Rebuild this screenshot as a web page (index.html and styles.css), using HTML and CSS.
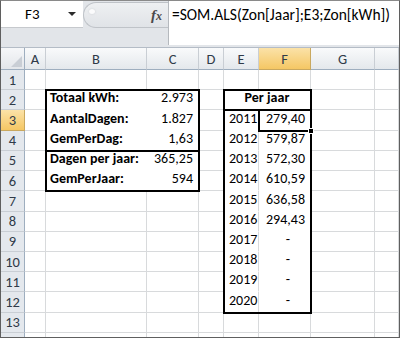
FILE: index.html
```html
<!DOCTYPE html>
<html>
<head>
<meta charset="utf-8">
<link rel="stylesheet" href="styles.css">
</head>
<body>
<div class="app">
  <div class="fbar">
    <div class="namecol">
      <div class="namebox"><span class="nb-text">F3</span><span class="nb-arrow"></span></div>
    </div>
    <div class="fxzone">
      <div class="fxbtn"><span class="grip"></span><span class="fx">f<span class="fx-x">x</span></span></div>
    </div>
    <div class="formula">=SOM.ALS(Zon[Jaar];E3;Zon[kWh])</div>
  </div>
  <div class="sheet">
    <div class="cells">
      <!-- header row -->
      <div class="corner"><span class="tri"></span></div>
      <div class="ch">A</div><div class="ch">B</div><div class="ch">C</div><div class="ch">D</div>
      <div class="ch">E</div><div class="ch sel">F</div><div class="ch">G</div><div class="ch"></div>

      <!-- row 1 -->
      <div class="rh">1</div>
      <div class="c"></div><div class="c"></div><div class="c"></div><div class="c"></div>
      <div class="c"></div><div class="c"></div><div class="c"></div><div class="c"></div>

      <!-- row 2 -->
      <div class="rh">2</div>
      <div class="c"></div>
      <div class="c fill b">Totaal kWh:</div>
      <div class="c fill num">2.973</div>
      <div class="c"></div>
      <div class="c fill b ctr span2">Per jaar</div>
      <div class="c"></div><div class="c"></div>

      <!-- row 3 -->
      <div class="rh sel">3</div>
      <div class="c"></div>
      <div class="c fill b">AantalDagen:</div>
      <div class="c fill num">1.827</div>
      <div class="c"></div>
      <div class="c fill yr">2011</div>
      <div class="c fill num">279,40</div>
      <div class="c"></div><div class="c"></div>

      <!-- row 4 -->
      <div class="rh">4</div>
      <div class="c"></div>
      <div class="c fill b">GemPerDag:</div>
      <div class="c fill num">1,63</div>
      <div class="c"></div>
      <div class="c fill yr">2012</div>
      <div class="c fill num">579,87</div>
      <div class="c"></div><div class="c"></div>

      <!-- row 5 -->
      <div class="rh">5</div>
      <div class="c"></div>
      <div class="c fill b">Dagen per jaar:</div>
      <div class="c fill num">365,25</div>
      <div class="c"></div>
      <div class="c fill yr">2013</div>
      <div class="c fill num">572,30</div>
      <div class="c"></div><div class="c"></div>

      <!-- row 6 -->
      <div class="rh">6</div>
      <div class="c"></div>
      <div class="c fill b">GemPerJaar:</div>
      <div class="c fill num">594</div>
      <div class="c"></div>
      <div class="c fill yr">2014</div>
      <div class="c fill num">610,59</div>
      <div class="c"></div><div class="c"></div>

      <!-- row 7 -->
      <div class="rh">7</div>
      <div class="c"></div><div class="c"></div><div class="c"></div><div class="c"></div>
      <div class="c fill yr">2015</div>
      <div class="c fill num">636,58</div>
      <div class="c"></div><div class="c"></div>

      <!-- row 8 -->
      <div class="rh">8</div>
      <div class="c"></div><div class="c"></div><div class="c"></div><div class="c"></div>
      <div class="c fill yr">2016</div>
      <div class="c fill num">294,43</div>
      <div class="c"></div><div class="c"></div>

      <!-- row 9 -->
      <div class="rh">9</div>
      <div class="c"></div><div class="c"></div><div class="c"></div><div class="c"></div>
      <div class="c fill yr">2017</div>
      <div class="c fill num dash">-</div>
      <div class="c"></div><div class="c"></div>

      <!-- row 10 -->
      <div class="rh">10</div>
      <div class="c"></div><div class="c"></div><div class="c"></div><div class="c"></div>
      <div class="c fill yr">2018</div>
      <div class="c fill num dash">-</div>
      <div class="c"></div><div class="c"></div>

      <!-- row 11 -->
      <div class="rh">11</div>
      <div class="c"></div><div class="c"></div><div class="c"></div><div class="c"></div>
      <div class="c fill yr">2019</div>
      <div class="c fill num dash">-</div>
      <div class="c"></div><div class="c"></div>

      <!-- row 12 -->
      <div class="rh">12</div>
      <div class="c"></div><div class="c"></div><div class="c"></div><div class="c"></div>
      <div class="c fill yr">2020</div>
      <div class="c fill num dash">-</div>
      <div class="c"></div><div class="c"></div>

      <!-- row 13 -->
      <div class="rh">13</div>
      <div class="c"></div><div class="c"></div><div class="c"></div><div class="c"></div>
      <div class="c"></div><div class="c"></div><div class="c"></div><div class="c"></div>

      <!-- row 14 (partial) -->
      <div class="rh"></div>
      <div class="c"></div><div class="c"></div><div class="c"></div><div class="c"></div>
      <div class="c"></div><div class="c"></div><div class="c"></div><div class="c"></div>
    </div>

    <!-- borders drawn over the cells, on a second grid with the same tracks -->
    <div class="marks">
      <div class="box box-summary"></div>
      <div class="box-split"></div>
      <div class="box box-years"></div>
      <div class="box-head"></div>
      <div class="cursor"><span class="handle"></span></div>
    </div>
  </div>
</div>
</body>
</html>
```
FILE: styles.css
```css
* {
  box-sizing: border-box;
  margin: 0;
  padding: 0;
}

html, body {
  width: 400px;
  height: 338px;
  overflow: hidden;
}

body {
  font-family: Carlito, Calibri, Lato, "Open Sans", sans-serif;
  color: #000;
}

.app {
  width: 400px;
  height: 338px;
  border: 1px solid #5f5f5f;
  border-top-color: #8a8a8a;
  display: flex;
  flex-direction: column;
  background: #e2e5e9;
}

/* ---------- formula bar ---------- */
.fbar {
  height: 44px;
  flex: none;
  display: flex;
}

.namecol {
  width: 82px;
}

.namebox {
  height: 27px;
  background: #fff;
  display: flex;
  align-items: center;
  border-bottom: 1px solid #c6c9cd;
}

.nb-text {
  margin-left: 24px;
  font-size: 15px;
}

.nb-arrow {
  margin-left: auto;
  margin-right: 7px;
  width: 0;
  height: 0;
  border-left: 4px solid transparent;
  border-right: 4px solid transparent;
  border-top: 4px solid #2b2b2b;
}

.fxzone {
  width: 85px;
  padding-top: 1px;
}

.fxbtn {
  height: 26px;
  border-radius: 13px 0 0 13px;
  background: linear-gradient(#eef0f2, #e0e3e7);
  border: 1px solid #bfc3c8;
  border-right: none;
  display: flex;
  align-items: center;
}

.grip {
  width: 6px;
  height: 5px;
  border-radius: 50%;
  margin-left: 5px;
  margin-top: -8px;
  background: #fbfbfc;
  box-shadow: 0 0 2px #c9ccd0;
}

.fx {
  margin-left: auto;
  margin-right: 6px;
  font-family: "Liberation Serif", serif;
  font-style: italic;
  font-weight: bold;
  font-size: 15px;
  color: #4a4a4a;
}

.fx-x {
  font-size: 12px;
}

.formula {
  flex: 1;
  background: #fff;
  border-left: 1px solid #b5b9be;
  padding: 6px 0 0 3px;
  font-size: 15.5px;
  line-height: 1;
}

/* ---------- sheet ---------- */
.sheet {
  flex: 1;
  margin-top: 2px;
  border-top: 1px solid #b4bcc6;
  background: #fff;
  display: grid;
  overflow: hidden;
}

.cells,
.marks {
  grid-area: 1 / 1;
  display: grid;
  grid-template-columns: 24px 21px 101px 52px 25px 35px 52px 64px 24px;
  grid-template-rows: 22px repeat(13, 20.23px) 1fr;
}

.marks {
  z-index: 2;
  pointer-events: none;
}

.corner {
  background: linear-gradient(#f6f7f9, #e3e6ea);
  border-right: 1px solid #9eaebf;
  border-bottom: 1px solid #9eaebf;
  display: flex;
  align-items: flex-end;
  justify-content: flex-end;
  padding: 0 2px 2px 0;
}

.tri {
  width: 0;
  height: 0;
  border-left: 11px solid transparent;
  border-bottom: 11px solid #c9ced5;
}

.ch {
  background: linear-gradient(#f9fafb, #e4e8ec);
  border-right: 1px solid #c9ced4;
  border-bottom: 1px solid #9eaebf;
  display: flex;
  align-items: center;
  justify-content: center;
  font-size: 14.5px;
  color: #2f3a48;
}

.rh {
  background: #e4e8ed;
  border-right: 1px solid #9eaebf;
  border-bottom: 1px solid #c9ced4;
  display: flex;
  align-items: center;
  justify-content: center;
  font-size: 14.5px;
  color: #2f3a48;
}

.ch.sel,
.rh.sel {
  background: linear-gradient(#fbe2a8, #f5c764);
  border-right-color: #c9a85f;
  border-bottom-color: #c9a85f;
}

.c {
  border-right: 1px solid #d8dadc;
  border-bottom: 1px solid #d8dadc;
  font-size: 14px;
  line-height: 1;
  display: flex;
  align-items: flex-end;
  padding: 0 4px 4px 4px;
  white-space: nowrap;
}

.fill {
  border-color: #fff;
}

.b {
  font-weight: bold;
}

.num {
  justify-content: flex-end;
  padding-right: 5px;
}

.num.dash {
  padding-right: 20px;
}

.ctr {
  justify-content: center;
}

.span2 {
  grid-column: span 2;
}

.yr {
  padding-left: 5px;
  border-right-color: #d8dadc;
}

/* ---------- overlay borders ---------- */
.box {
  border: 2px solid #000;
  margin: -1px;
}

.box-summary {
  grid-row: 3 / 8;
  grid-column: 3 / 5;
}

.box-split {
  grid-row: 6;
  grid-column: 3 / 5;
  border-top: 2px solid #000;
  margin-top: -1px;
}

.box-years {
  grid-row: 3 / 14;
  grid-column: 6 / 8;
}

.box-head {
  grid-row: 3;
  grid-column: 6 / 8;
  border-bottom: 2px solid #000;
  margin-bottom: -1px;
}

.cursor {
  grid-row: 4;
  grid-column: 7;
  border: 2px solid #000;
  margin: -1px;
  position: relative;
}

.handle {
  position: absolute;
  right: -4px;
  bottom: -4px;
  width: 6px;
  height: 6px;
  background: #000;
  border: 1px solid #fff;
}
```
